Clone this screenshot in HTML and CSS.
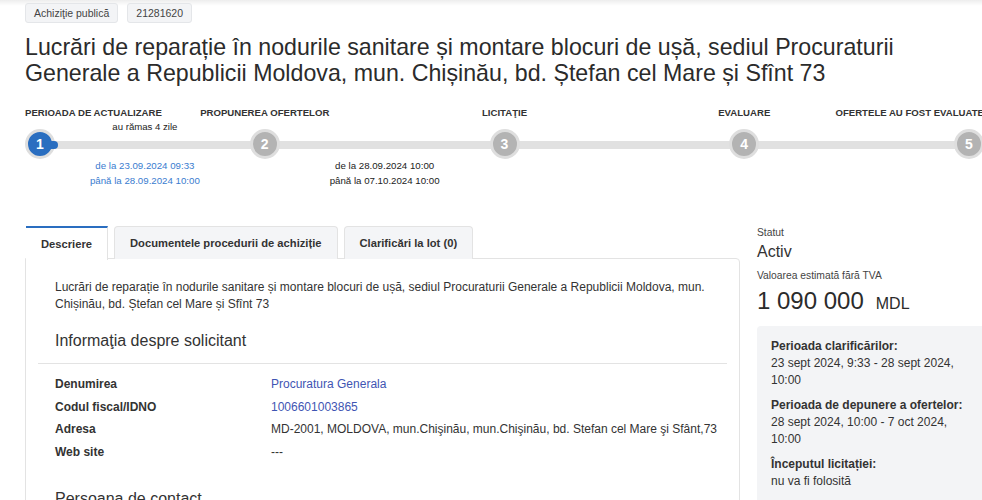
FILE: index.html
```html
<!DOCTYPE html>
<html lang="ro">
<head>
<meta charset="utf-8">
<title>Achiziție publică 21281620</title>
<link rel="stylesheet" href="styles.css">
</head>
<body>
<div class="page">
  <div class="tags">
    <span class="tag">Achiziţie publică</span>
    <span class="tag">21281620</span>
  </div>
  <h1 class="title">Lucrări de reparație în nodurile sanitare și montare blocuri de ușă, sediul Procuraturii Generale a Republicii Moldova, mun. Chișinău, bd. Ștefan cel Mare și Sfînt 73</h1>

  <div class="steps">
    <div class="step-labels">
      <span class="sl sl1">PERIOADA DE ACTUALIZARE</span>
      <span class="sl sl2">PROPUNEREA OFERTELOR</span>
      <span class="sl sl3">LICITAŢIE</span>
      <span class="sl sl4">EVALUARE</span>
      <span class="sl sl5">OFERTELE AU FOST EVALUATE</span>
    </div>
    <div class="step-remain"><span>au rămas 4 zile</span></div>
    <div class="track">
      <span class="dot active d1">1</span>
      <span class="dot d2">2</span>
      <span class="dot d3">3</span>
      <span class="dot d4">4</span>
      <span class="dot d5">5</span>
    </div>
    <div class="step-dates">
      <div class="sd current">de la 23.09.2024 09:33<br>până la 28.09.2024 10:00</div>
      <div class="sd">de la 28.09.2024 10:00<br>până la 07.10.2024 10:00</div>
      <div class="sd"></div>
      <div class="sd"></div>
    </div>
  </div>

  <div class="main">
    <div class="content">
      <div class="tabs">
        <span class="tab active">Descriere</span>
        <span class="tab">Documentele procedurii de achiziție</span>
        <span class="tab">Clarificări la lot (0)</span>
      </div>
      <div class="panel">
        <p class="desc">Lucrări de reparație în nodurile sanitare și montare blocuri de ușă, sediul Procuraturii Generale a Republicii Moldova, mun. Chișinău, bd. Ștefan cel Mare și Sfînt 73</p>
        <h2 class="sec">Informaţia despre solicitant</h2>
        <div class="rule"></div>
        <div class="info">
          <div class="k">Denumirea</div><div class="v"><a class="lnk">Procuratura Generala</a></div>
          <div class="k">Codul fiscal/IDNO</div><div class="v"><a class="lnk">1006601003865</a></div>
          <div class="k">Adresa</div><div class="v">MD-2001, MOLDOVA, mun.Chişinău, mun.Chişinău, bd. Stefan cel Mare şi Sfânt,73</div>
          <div class="k">Web site</div><div class="v">---</div>
        </div>
        <h2 class="sec sec2">Persoana de contact</h2>
      </div>
    </div>
    <aside class="side">
      <div class="s-label">Statut</div>
      <div class="s-status">Activ</div>
      <div class="s-label s-gap">Valoarea estimată fără TVA</div>
      <div class="s-value"><span class="amount">1 090 000</span><span class="cur">MDL</span></div>
      <div class="s-box">
        <div class="b-title">Perioada clarificărilor:</div>
        <div class="b-text">23 sept 2024, 9:33 - 28 sept 2024, 10:00</div>
        <div class="b-title b-gap">Perioada de depunere a ofertelor:</div>
        <div class="b-text">28 sept 2024, 10:00 - 7 oct 2024, 10:00</div>
        <div class="b-title b-gap">Începutul licitației:</div>
        <div class="b-text">nu va fi folosită</div>
      </div>
    </aside>
  </div>
</div>
</body>
</html>
```

FILE: styles.css
```css
* { box-sizing: border-box; }
html, body { margin: 0; padding: 0; }
body {
  font-family: "Liberation Sans", Arial, sans-serif;
  color: #333;
  background: #fff linear-gradient(rgba(0,0,0,0.07), rgba(0,0,0,0) 6px) no-repeat;
  overflow: hidden;
  width: 982px;
  height: 500px;
}
.page {
  width: 959px;
  margin-left: 25px;
  padding-top: 3px;
}

/* tags */
.tags { display: flex; gap: 9px; }
.tag {
  font-size: 10.5px;
  line-height: 13px;
  padding: 3px 8px 2px;
  border: 1px solid #e4e6e9;
  background: #f3f4f6;
  border-radius: 3px;
  color: #444;
}

/* title */
.title {
  margin: 11px 0 0;
  font-size: 23.2px;
  line-height: 26px;
  font-weight: normal;
  color: #2b2b2b;
  max-width: 935px;
}

/* steps */
.steps { margin-top: 21px; }
.step-labels, .track {
  display: grid;
  grid-template-columns: repeat(8, 1fr);
}
.sl {
  grid-row: 1;
  font-size: 9.6px;
  line-height: 12px;
  font-weight: bold;
  white-space: nowrap;
  color: #333;
}
.sl1 { grid-column: 1 / 3; justify-self: start; }
.sl2 { grid-column: 2 / 4; justify-self: center; }
.sl3 { grid-column: 4 / 6; justify-self: center; }
.sl4 { grid-column: 6 / 8; justify-self: center; }
.sl5 { grid-column: 7 / 9; justify-self: end; }

.step-remain {
  display: grid;
  grid-template-columns: repeat(4, 1fr);
  margin-top: 2px;
  font-size: 9.6px;
  line-height: 12px;
  text-align: center;
  color: #222;
}

.track {
  margin-top: -4px;
  height: 30px;
  background: linear-gradient(#e1e1e1, #e1e1e1) 15px 12px / 100% 8px no-repeat;
}
.dot {
  grid-row: 1;
  position: relative;
  width: 30px;
  height: 30px;
  border-radius: 50%;
  border: 3px solid #dedede;
  background: #b3b3b3;
  color: #fff;
  font-size: 14px;
  font-weight: bold;
  display: flex;
  align-items: center;
  justify-content: center;
}
.dot.active { background: #2a6ec0; }
.dot.active::after {
  content: "";
  position: absolute;
  left: 20px;
  top: 9px;
  width: 10px;
  height: 8px;
  background: #2a6ec0;
  border-radius: 0 4px 4px 0;
}
.d1 { grid-column: 1; justify-self: start; }
.d2 { grid-column: 2 / 4; justify-self: center; }
.d3 { grid-column: 4 / 6; justify-self: center; }
.d4 { grid-column: 6 / 8; justify-self: center; }
.d5 { grid-column: 8; justify-self: end; }

.step-dates {
  display: grid;
  grid-template-columns: repeat(4, 1fr);
  margin-top: -1px;
  font-size: 9.7px;
  line-height: 15px;
  text-align: center;
  color: #222;
}
.sd.current { color: #3a7ccf; }

/* main */
.main {
  display: flex;
  gap: 17px;
  margin-top: 38px;
}
.content { width: 715px; flex: none; }
.tabs {
  display: flex;
  gap: 6px;
  height: 33px;
  position: relative;
  z-index: 1;
  margin-bottom: -1px;
  padding-left: 1px;
}
.tab {
  display: flex;
  align-items: center;
  padding: 0 15px;
  font-size: 11.2px;
  font-weight: bold;
  color: #333;
  background: #f4f5f7;
  border: 1px solid #e3e3e3;
  border-bottom: none;
  border-radius: 4px 4px 0 0;
}
.tab.active {
  background: #fff;
  border-top: 2px solid #2a6ec0;
  border-left: none;
  border-radius: 0;
  height: 34px;
}
.panel {
  border: 1px solid #e3e3e3;
  border-top-right-radius: 4px;
  padding: 20px 12px 0 12px;
  height: 260px;
}
.desc {
  margin: 0;
  padding: 0 17px;
  font-size: 12px;
  line-height: 17px;
  color: #333;
}
.sec {
  margin: 18px 0 0;
  padding: 0 17px;
  font-size: 16px;
  line-height: 20px;
  font-weight: normal;
  color: #333;
}
.sec2 { margin-top: 26px; }
.rule {
  height: 1px;
  background: #e3e3e3;
  margin-top: 12px;
}
.info {
  display: grid;
  grid-template-columns: 216px 1fr;
  padding: 9px 0 0 17px;
  font-size: 12px;
  line-height: 22.6px;
}
.k { font-weight: bold; color: #333; }
.v { color: #333; white-space: nowrap; }
.lnk { color: #3f55b3; text-decoration: none; }

/* sidebar */
.side { width: 240px; flex: none; }
.s-label {
  font-size: 10.3px;
  line-height: 14px;
  color: #444;
}
.s-gap { margin-top: 7px; }
.s-status {
  margin-top: 2px;
  font-size: 16px;
  line-height: 20px;
  color: #333;
}
.s-value {
  margin-top: 4px;
  line-height: 28px;
  color: #2b2b2b;
}
.amount { font-size: 24px; }
.cur { font-size: 16px; margin-left: 12px; }
.s-box {
  margin-top: 8px;
  background: #f3f4f6;
  border-radius: 4px;
  padding: 12px 30px 20px 14px;
  font-size: 12px;
  line-height: 17px;
}
.b-title { font-weight: bold; color: #333; }
.b-gap { margin-top: 8px; }
.b-text { color: #333; }
```
